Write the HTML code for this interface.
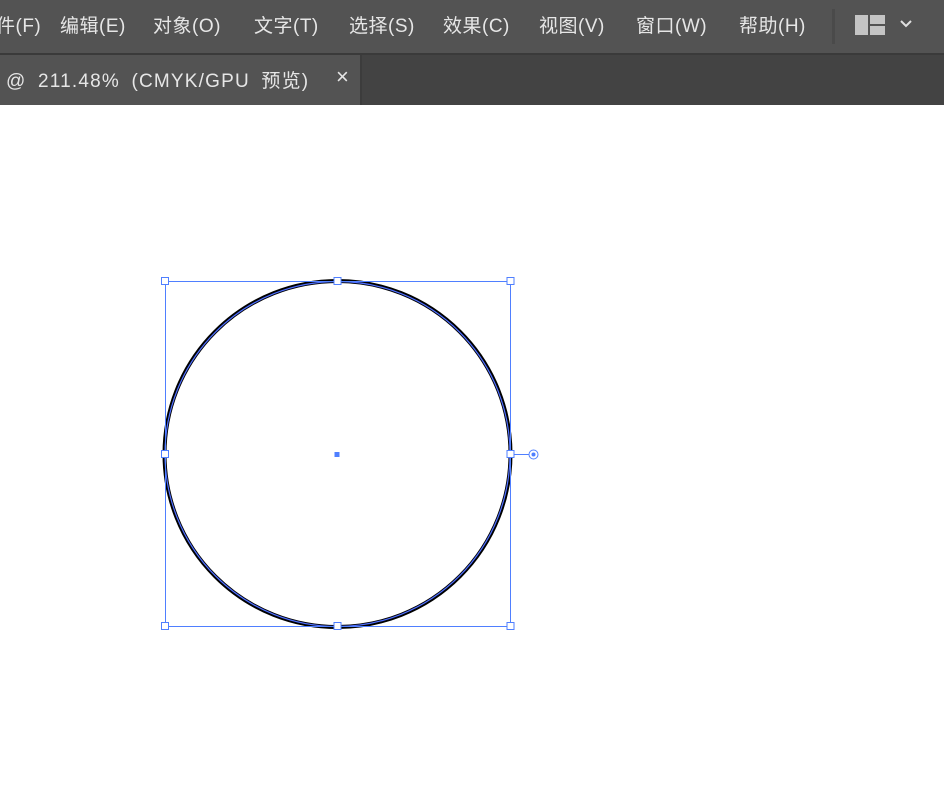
<!DOCTYPE html>
<html><head><meta charset="utf-8"><style>
html,body{margin:0;padding:0;width:944px;height:792px;overflow:hidden;background:#fff;font-family:"Liberation Sans","Noto Sans CJK SC",sans-serif;}
.menu{position:absolute;left:0;top:0;width:944px;height:53px;background:#535353;border-bottom:2px solid #3a3a3a;}
.menu span{position:absolute;top:11px;color:#e6e6e6;font-size:19px;letter-spacing:0.5px;white-space:nowrap;}
.tabs{position:absolute;left:0;top:55px;width:944px;height:50px;background:#434343;}
.tab{position:absolute;left:0;top:0;width:360px;height:50px;background:#535353;border-right:2px solid #3c3c3c;}
.tab span{position:absolute;top:11px;color:#e6e6e6;font-size:19px;white-space:nowrap;}
</style></head><body>
<div class="menu">
<span style="left:-4px">件(F)</span>
<span style="left:60px">编辑(E)</span>
<span style="left:153px">对象(O)</span>
<span style="left:254px">文字(T)</span>
<span style="left:349px">选择(S)</span>
<span style="left:443px">效果(C)</span>
<span style="left:539px">视图(V)</span>
<span style="left:636px">窗口(W)</span>
<span style="left:739px">帮助(H)</span>
<div style="position:absolute;left:832px;top:9px;width:3px;height:35px;background:#4a4a4a"></div>
<div style="position:absolute;left:855px;top:15px;width:13px;height:20px;background:#c4c4c4"></div>
<div style="position:absolute;left:870px;top:15px;width:15px;height:9px;background:#c4c4c4"></div>
<div style="position:absolute;left:870px;top:26px;width:15px;height:9px;background:#c4c4c4"></div>
<svg style="position:absolute;left:899px;top:18px" width="14" height="10"><path d="M2 3 L7 8 L12 3" stroke="#e0e0e0" stroke-width="2" fill="none"/></svg>
</div>
<div class="tabs"><div class="tab">
<span style="left:6px;letter-spacing:1.2px;word-spacing:5px">@ 211.48% (CMYK/GPU 预览)</span>
<span style="left:336px;font-size:22px;top:9px">×</span>
</div></div>
<svg style="position:absolute;left:0;top:0" width="944" height="792">
<circle cx="337.5" cy="454" r="173" fill="none" stroke="#000" stroke-width="4"/>
<circle cx="337.5" cy="454" r="172.5" fill="none" stroke="#4f6fff" stroke-width="1.2"/>
<rect x="165.5" y="281.5" width="345" height="345" fill="none" stroke="#4f7fff" stroke-width="1"/>
<g fill="#fff" stroke="#4f7fff" stroke-width="1">
<rect x="161.5" y="277.5" width="7" height="7"/><rect x="334" y="277.5" width="7" height="7"/><rect x="507" y="277.5" width="7" height="7"/>
<rect x="161.5" y="450.5" width="7" height="7"/><rect x="507" y="450.5" width="7" height="7"/>
<rect x="161.5" y="622.5" width="7" height="7"/><rect x="334" y="622.5" width="7" height="7"/><rect x="507" y="622.5" width="7" height="7"/>
</g>
<line x1="514" y1="454.5" x2="529" y2="454.5" stroke="#4f7fff"/>
<circle cx="533.5" cy="454.5" r="4.5" fill="#fff" stroke="#4f7fff"/>
<circle cx="533.5" cy="454.5" r="2" fill="#4f7fff"/>
<rect x="334.5" y="452" width="5" height="5" fill="#4f7fff"/>
</svg>
</body></html>
